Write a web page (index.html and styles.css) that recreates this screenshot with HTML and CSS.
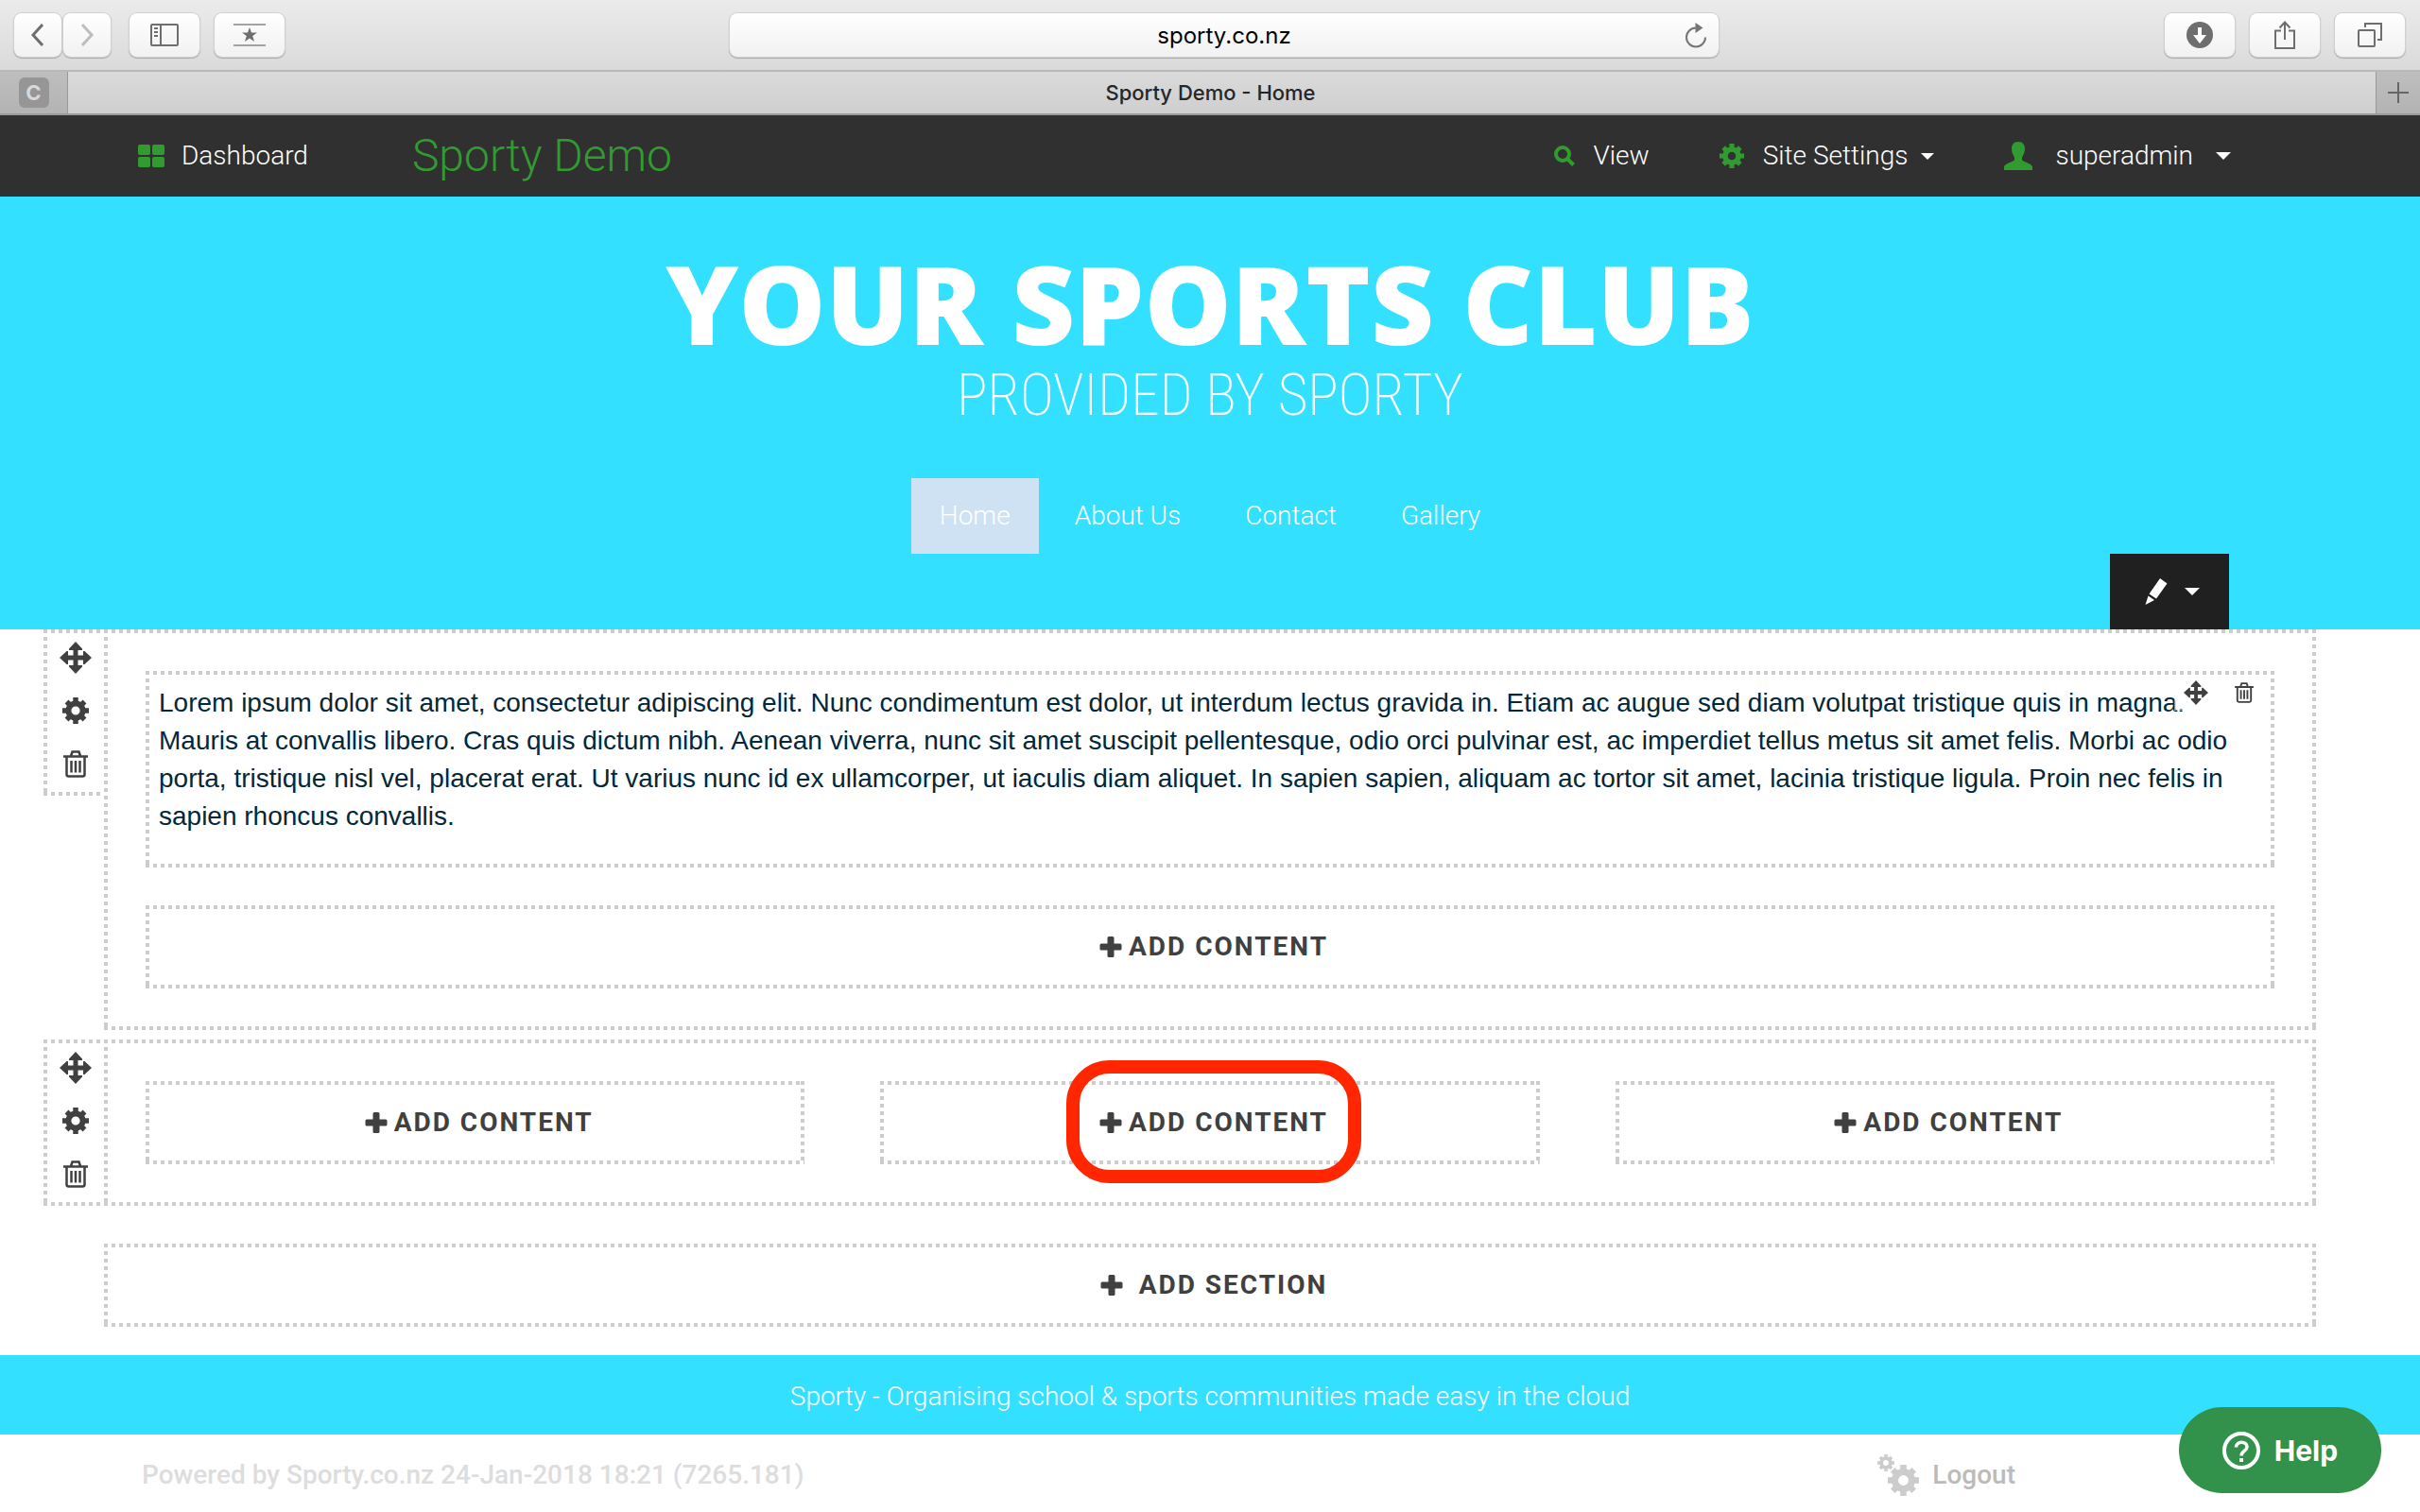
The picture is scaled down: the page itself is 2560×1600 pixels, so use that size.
FILE: index.html
```
<!DOCTYPE html>
<html lang="en">
<head>
<meta charset="utf-8">
<meta name="viewport" content="width=device-width, initial-scale=1">
<title>Sporty Demo - Home</title>
<link rel="stylesheet" href="styles.css">
</head>
<body>
<svg class="sprite" aria-hidden="true">
  <symbol id="i-move" viewBox="0 0 34 34">
    <path fill="currentColor" d="M17 0l7 7.500v1.500h-4.500v5.500h5.500v-4.500h1.500l7.500 7-7.500 7h-1.500v-4.500h-5.500v5.500h4.500v1.500l-7 7.500-7-7.500v-1.500h4.500v-5.500h-5.500v4.500h-1.500l-7.500-7 7.500-7h1.500v4.500h5.500v-5.500h-4.500v-1.500z"/>
  </symbol>
  <symbol id="i-gear" viewBox="-14 -14 28 28">
    <circle r="7.600" fill="none" stroke="currentColor" stroke-width="6"/>
    <path stroke="currentColor" stroke-width="5.500" d="M0-14v5M0 14v-5M-14 0h5M14 0h-5M-9.500-9.500l4 4M9.500-9.500l-4 4M-9.500 9.500l4-4M9.500 9.500l-4-4"/>
  </symbol>
  <symbol id="i-trash" viewBox="0 0 26 29">
    <path fill="none" stroke="currentColor" stroke-width="2.500" d="M0 6.500h26M8 6l1.500-4.500h7l1.500 4.500M3.500 7v18.500q0 2 2 2h15q2 0 2-2v-18.500"/>
    <path stroke="currentColor" stroke-width="2.500" d="M8.500 11v12.500M13 11v12.500M17.500 11v12.500"/>
  </symbol>
  <symbol id="i-plus" viewBox="0 0 24 24">
    <path fill="currentColor" d="M10 1h4q1.500 0 1.500 1.500v6h6.500q1.500 0 1.500 1.500v4q0 1.500-1.500 1.500h-6.500v6q0 1.500-1.500 1.500h-4q-1.500 0-1.500-1.500v-6h-6.500q-1.500 0-1.500-1.500v-4q0-1.500 1.500-1.500h6.500v-6q0-1.500 1.500-1.500z"/>
  </symbol>
  <symbol id="i-caret" viewBox="0 0 16 8"><path fill="currentColor" d="M0 0h16l-8 8z"/></symbol>
</svg>

<header class="browser">
  <div class="toolbar">
    <div class="tools">
      <div class="history">
        <button class="tool narrow" aria-label="Back"><svg width="16" height="26" viewBox="0 0 16 26" fill="none" stroke="#6e6e6e" stroke-width="3"><path d="M13 2L3 13l10 11"/></svg></button>
        <button class="tool narrow" aria-label="Forward"><svg width="16" height="26" viewBox="0 0 16 26" fill="none" stroke="#bdbdbd" stroke-width="3"><path d="M3 2l10 11L3 24"/></svg></button>
      </div>
      <button class="tool" aria-label="Show sidebar"><svg width="30" height="24" viewBox="0 0 30 24" fill="none" stroke="#6e6e6e" stroke-width="2"><rect x="1" y="1" width="28" height="22" rx="1"/><path d="M11 1v22"/><path d="M4 5h4M4 9h4M4 13h4"/></svg></button>
      <button class="tool" aria-label="Top sites"><svg width="34" height="26" viewBox="0 0 34 26"><path stroke="#a3a3a3" stroke-width="2" d="M0 2h34M0 24h34"/><path fill="#6e6e6e" d="M17 5l2 5.500h6l-4.800 3.500 1.800 6-5-3.600-5 3.600 1.800-6-4.800-3.500h6z"/></svg></button>
    </div>
    <div class="address">
      <span>sporty.co.nz</span>
      <button class="reload" aria-label="Reload"><svg width="24" height="28" viewBox="0 0 24 28"><path fill="none" stroke="#757575" stroke-width="2" d="M12 5.500a10 10 0 1 0 10 10"/><path fill="#757575" d="M11.500 0l8 5.500-8 5.500z"/></svg></button>
    </div>
    <div class="tools end">
      <button class="tool" aria-label="Downloads"><svg width="28" height="28" viewBox="0 0 28 28"><circle cx="14" cy="14" r="14" fill="#6e6e6e"/><path fill="#fff" d="M12 6h4v8h5l-7 9-7-9h5z"/></svg></button>
      <button class="tool" aria-label="Share"><svg width="24" height="30" viewBox="0 0 24 30" fill="none" stroke="#6e6e6e" stroke-width="2"><path d="M8 10.500H2V29h20V10.500h-6M12 20V2M6.500 7.500L12 1.500l5.500 6"/></svg></button>
      <button class="tool" aria-label="Show all tabs"><svg width="26" height="26" viewBox="0 0 26 26" fill="none" stroke="#6e6e6e" stroke-width="2"><rect x="1" y="8" width="17" height="17" rx="1"/><path d="M8 5V1h17v17h-4"/></svg></button>
    </div>
  </div>
  <div class="tabs">
    <button class="tab pinned" aria-label="Pinned tab"><span class="favicon">C</span></button>
    <button class="tab active">Sporty Demo - Home</button>
    <button class="tab new" aria-label="New tab"><svg width="22" height="22" viewBox="0 0 22 22" stroke="#666" stroke-width="2"><path d="M11 0v22M0 11h22"/></svg></button>
  </div>
</header>

<nav class="adminbar" aria-label="Site administration">
  <a class="item dashboard" href="#dashboard"><svg class="green" width="28" height="24" viewBox="0 0 28 24" fill="currentColor"><rect width="13" height="11" rx="2"/><rect x="15" width="13" height="11" rx="2"/><rect y="13" width="13" height="11" rx="2"/><rect x="15" y="13" width="13" height="11" rx="2"/></svg>Dashboard</a>
  <a class="brand" href="#home">Sporty Demo</a>
  <div class="account">
    <a class="item" href="#view"><svg class="green" width="22" height="22" viewBox="0 0 22 22" fill="none" stroke="currentColor" stroke-width="4"><circle cx="9" cy="9" r="7"/><path d="M13.500 13.500l7 7"/></svg>View</a>
    <button class="item"><svg class="green" width="26" height="26"><use href="#i-gear"/></svg>Site Settings<svg class="caret" width="14" height="7"><use href="#i-caret"/></svg></button>
    <button class="item user"><svg class="green" width="30" height="30" viewBox="0 0 30 30" fill="currentColor"><path d="M15 0c5 0 7 3.500 7 7.500 0 3.500-1.500 6.500-3 9v2.500c0 2 10 3.500 11 7.500v3.500H0v-3.500c1-4 11-5.500 11-7.500v-2.500c-1.500-2.500-3-5.500-3-9C8 3.500 10 0 15 0z"/></svg>superadmin<svg class="caret" width="16" height="8"><use href="#i-caret"/></svg></button>
  </div>
</nav>

<section class="hero">
  <h1>YOUR SPORTS CLUB</h1>
  <p class="tagline">PROVIDED BY SPORTY</p>
  <nav class="menu" aria-label="Main">
    <a class="current" href="#home">Home</a>
    <a href="#about">About Us</a>
    <a href="#contact">Contact</a>
    <a href="#gallery">Gallery</a>
  </nav>
  <button class="edit" aria-label="Edit header">
    <svg width="24" height="28" viewBox="0 0 24 28" fill="currentColor"><path d="M16 0l7.500 5.500L12 21.500l-7.500-5zM3.500 18.500l6.500 4.500-9.500 5z"/></svg>
    <svg width="16" height="8"><use href="#i-caret"/></svg>
  </button>
</section>

<main class="builder">
  <div class="row">
    <div class="handle">
      <button aria-label="Move section"><svg width="34" height="34"><use href="#i-move"/></svg></button>
      <button aria-label="Section settings"><svg width="28" height="28"><use href="#i-gear"/></svg></button>
      <button aria-label="Delete section"><svg width="26" height="29"><use href="#i-trash"/></svg></button>
    </div>
    <section class="panel dotted">
      <article class="text dotted">
        <p>Lorem ipsum dolor sit amet, consectetur adipiscing elit. Nunc condimentum est dolor, ut interdum lectus gravida in. Etiam ac augue sed diam volutpat tristique quis in magna. Mauris at convallis libero. Cras quis dictum nibh. Aenean viverra, nunc sit amet suscipit pellentesque, odio orci pulvinar est, ac imperdiet tellus metus sit amet felis. Morbi ac odio porta, tristique nisl vel, placerat erat. Ut varius nunc id ex ullamcorper, ut iaculis diam aliquet. In sapien sapien, aliquam ac tortor sit amet, lacinia tristique ligula. Proin nec felis in sapien rhoncus convallis.</p>
        <div class="actions">
          <button aria-label="Move content"><svg width="26" height="26"><use href="#i-move"/></svg></button>
          <button aria-label="Delete content"><svg width="20" height="22"><use href="#i-trash"/></svg></button>
        </div>
      </article>
      <button class="add dotted"><svg width="24" height="24"><use href="#i-plus"/></svg>ADD CONTENT</button>
    </section>
  </div>

  <div class="row">
    <div class="handle">
      <button aria-label="Move section"><svg width="34" height="34"><use href="#i-move"/></svg></button>
      <button aria-label="Section settings"><svg width="28" height="28"><use href="#i-gear"/></svg></button>
      <button aria-label="Delete section"><svg width="26" height="29"><use href="#i-trash"/></svg></button>
    </div>
    <section class="panel columns dotted">
      <button class="add dotted"><svg width="24" height="24"><use href="#i-plus"/></svg>ADD CONTENT</button>
      <button class="add marked dotted"><svg width="24" height="24"><use href="#i-plus"/></svg>ADD CONTENT</button>
      <button class="add dotted"><svg width="24" height="24"><use href="#i-plus"/></svg>ADD CONTENT</button>
    </section>
  </div>

  <button class="add section dotted"><svg width="24" height="24"><use href="#i-plus"/></svg>ADD SECTION</button>
</main>

<footer>
  <p class="strip">Sporty - Organising school &amp; sports communities made easy in the cloud</p>
  <div class="credits">
    <span>Powered by Sporty.co.nz 24-Jan-2018 18:21 (7265.181)</span>
    <a href="#logout"><svg width="44" height="44" viewBox="0 0 44 44"><use href="#i-gear" x="0" y="0" width="18" height="18"/><use href="#i-gear" x="11" y="11" width="33" height="33"/></svg><span>Logout</span></a>
  </div>
</footer>

<button class="help"><svg width="40" height="40" viewBox="0 0 40 40" fill="none" stroke="currentColor" stroke-width="4"><circle cx="20" cy="20" r="18"/><path stroke-width="3.500" d="M14.500 16.500c0-7 11.500-7 11.500-.5 0 4.500-6 4.500-6 9.500"/><path d="M20 28v4"/></svg>Help</button>
</body>
</html>
```

FILE: styles.css
```
*, *::after { box-sizing: border-box; }

body {
  margin: 0;
  min-height: 100vh;
  background: #fff;
  color: #404040;
  font: 300 28px/40px Roboto, "Open Sans", sans-serif;
}

button {
  margin: 0;
  padding: 0;
  border: 0;
  background: none;
  color: inherit;
  font: inherit;
  cursor: pointer;
}

a { color: inherit; text-decoration: none; }
h1, p { margin: 0; }
svg { display: block; flex: none; }
.sprite { position: absolute; width: 0; height: 0; }

/* Browser frame */
.browser { font: 400 24px/32px Inter, sans-serif; color: #000; }

.toolbar {
  display: grid;
  grid-template-columns: 757fr 1046fr 726fr;
  align-items: center;
  height: 76px;
  padding: 0 16px 0 15px;
  border-bottom: 2px solid #b8b8b8;
  background: linear-gradient(#ebebeb, #dadada);
}

.tools { display: flex; gap: 16px; }
.tools.end { justify-content: flex-end; }
.history { display: flex; gap: 2px; margin-right: 4px; }

.tool, .address {
  display: flex;
  align-items: center;
  justify-content: center;
  height: 46px;
  border-radius: 8px;
  background: linear-gradient(#fff, #f1f1f1);
  box-shadow: 0 0 0 1px #d0d0d0, 0 1px 1px 1px #aaa;
}

.tool { width: 74px; }
.tool.narrow { width: 50px; }
.address { position: relative; padding-top: 2px; }
.reload { position: absolute; right: 12px; }

.tabs {
  display: flex;
  height: 46px;
  border-bottom: 2px solid #999;
}

.tab {
  display: flex;
  align-items: center;
  justify-content: center;
  background: linear-gradient(#bebebe, #b3b3b3);
}

.tab.active {
  flex: 1;
  padding-right: 24px;
  background: linear-gradient(#dadada, #cfcfcf);
  color: #262626;
  font-size: 22px;
  font-weight: 500;
}

.tab.pinned { width: 72px; border-right: 1px solid #999; }
.tab.new { width: 47px; border-left: 1px solid #999; }

.favicon {
  width: 32px;
  border-radius: 6px;
  background: #969696;
  color: #d8d8d8;
  font-size: 22px;
  font-weight: 700;
}

/* Admin bar */
.adminbar {
  display: flex;
  align-items: center;
  height: 86px;
  padding: 0 200px 0 146px;
  background: #303030;
  color: #fff;
}

.item { display: flex; align-items: center; gap: 20px; }
.item .caret { margin-left: -6px; }
.item.dashboard { gap: 18px; }
.item.user { gap: 24px; }
.item.user .caret { margin-left: 0; }
.green, .brand { color: #319b31; }
.brand { margin-left: 110px; font-size: 48px; }
.account { display: flex; gap: 74px; margin-left: auto; }

/* Club header */
.hero {
  display: flex;
  flex-direction: column;
  align-items: center;
  padding: 52px 202px 0;
  background: #33e0ff;
  color: #fff;
}

h1 { font: 800 116px/120px "Open Sans", sans-serif; white-space: nowrap; }

.tagline {
  margin-top: 8px;
  font: 200 61px/60px "Roboto Condensed", Roboto, sans-serif;
}

.menu { display: flex; gap: 8px; margin-top: 58px; }
.menu a { padding: 20px 30px; }
.menu .current { background: #cfe2f3; }

.edit {
  display: flex;
  align-items: center;
  justify-content: center;
  gap: 18px;
  align-self: flex-end;
  width: 126px;
  height: 80px;
  padding-left: 6px;
  background: #202020;
}

/* Page builder */
.builder {
  display: flex;
  flex-direction: column;
  padding: 0 110px 30px 46px;
}

.dotted {
  --across: repeating-linear-gradient(90deg, #ccc 0 4px, transparent 4px 8px);
  --down: repeating-linear-gradient(#ccc 0 4px, transparent 4px 8px);
  border: 4px solid transparent;
  background:
    var(--across) top / 100% 4px no-repeat border-box,
    var(--across) bottom / 100% 4px no-repeat border-box,
    var(--down) left / 4px 100% no-repeat border-box,
    var(--down) right / 4px 100% no-repeat border-box;
}

.row { display: flex; align-items: flex-start; margin-bottom: 10px; }

.handle {
  --across: repeating-linear-gradient(90deg, #ccc 0 4px, transparent 4px 8px);
  display: grid;
  gap: 4px;
  width: 64px;
  padding: 4px 0 8px 4px;
  background:
    var(--across) top / 100% 4px no-repeat,
    var(--across) bottom / 100% 4px no-repeat,
    repeating-linear-gradient(#ccc 0 4px, transparent 4px 8px) left / 4px 100% no-repeat;
}

.handle button { display: grid; place-items: center; height: 52px; }

.panel { display: grid; flex: 1; gap: 40px; padding: 40px; }
.panel.columns { grid-template-columns: repeat(3, 1fr); gap: 80px; }

.text {
  position: relative;
  padding: 10px 10px 30px;
  color: #02283a;
  font: 400 28px/40px "Liberation Sans", Arial, sans-serif;
}

.actions {
  position: absolute;
  top: 0;
  right: 0;
  display: flex;
  align-items: center;
  gap: 28px;
  padding: 6px 18px 6px 10px;
  background: rgba(255, 255, 255, .5);
  color: #404040;
}

.add {
  position: relative;
  display: flex;
  align-items: center;
  justify-content: center;
  gap: 7px;
  height: 88px;
  padding-left: 8px;
  font-weight: 700;
  letter-spacing: 2px;
}

.add.section { gap: 17px; margin: 30px 0 0 64px; }

/* Callout ring round the middle button */
.marked::after {
  content: "";
  position: absolute;
  top: -26px;
  left: calc(50% - 152px);
  width: 312px;
  height: 130px;
  border: 14px solid #ff2600;
  border-radius: 46px;
  pointer-events: none;
}

/* Footer */
.strip {
  padding: 24px 22px 20px;
  background: #33e0ff;
  color: #fff;
  text-align: center;
}

.credits {
  display: flex;
  align-items: center;
  justify-content: space-between;
  height: 82px;
  padding: 3px 428px 0 150px;
  color: #ddd;
  font-weight: 500;
}

.credits a { display: flex; align-items: center; gap: 14px; color: #ccc; }
.credits a span { color: #bbb; }

.help {
  position: fixed;
  right: 41px;
  bottom: 20px;
  display: flex;
  align-items: center;
  justify-content: center;
  gap: 15px;
  width: 214px;
  height: 91px;
  border-radius: 46px;
  background: #32924b;
  color: #fff;
  font: 700 30px/40px Inter, sans-serif;
}
```
